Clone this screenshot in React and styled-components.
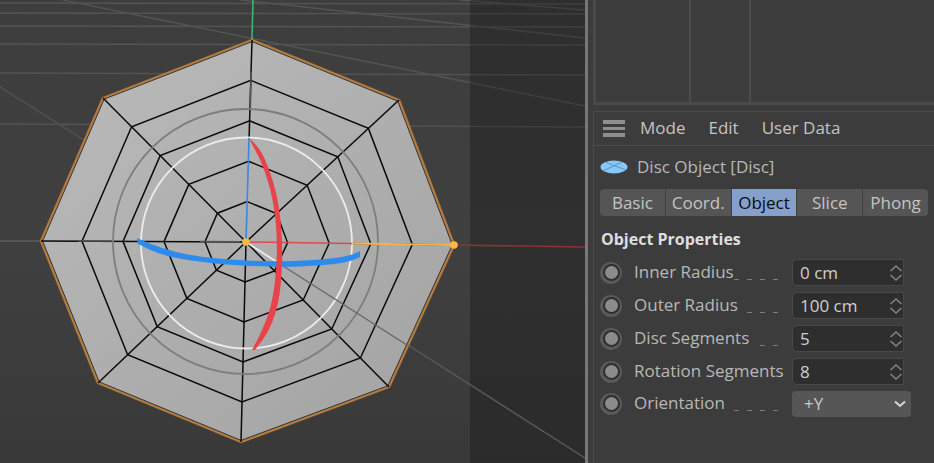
import React from "react";
import styled, { createGlobalStyle } from "styled-components";

const Global = createGlobalStyle`
  html, body { margin: 0; padding: 0; background: #3c3c3c; }
  #root { width: 934px; height: 463px; overflow: hidden; }
`;

const Page = styled.div`
  display: flex;
  width: 934px;
  height: 463px;
  overflow: hidden;
  background: #3c3c3c;
  font-family: "Open Sans", "Noto Sans", sans-serif;
  font-size: 17px;
  color: #bdbdbd;
`;
const ViewportSvg = styled.svg`
  display: block;
  flex: 0 0 585px;
  width: 585px;
  height: 463px;
`;
const Splitter = styled.div`
  flex: 0 0 3px;
  background: #777;
`;
const RightColumn = styled.div`
  flex: 1;
  display: flex;
  flex-direction: column;
  padding-left: 5px;
  min-width: 0;
`;
const TopPanel = styled.div`
  display: flex;
  height: 102px;
  flex: 0 0 auto;
  margin-bottom: 6px;
  border-left: 3px solid #4a4a4a;
  border-bottom: 3px solid #4a4a4a;
`;
const TopColumn = styled.div`
  width: ${(p) => p.$w}px;
  flex: 0 0 auto;
  border-right: 2px solid #4c4c4c;
  height: 100%;
`;
const AttrPanel = styled.div`
  flex: 1;
  border-left: 1px solid #4a4a4a;
  border-top: 1px solid #4a4a4a;
`;
const MenuBar = styled.div`
  display: flex;
  align-items: center;
  height: 33px;
  padding-left: 9px;
  border-bottom: 1px solid #4c4c4c;
`;
const Burger = styled.div`
  display: flex;
  flex-direction: column;
  gap: 3px;
  width: 22px;
  margin-right: 15px;
`;
const BurgerBar = styled.span`
  display: block;
  height: 3.5px;
  background: #8f8f8f;
`;
const MenuItem = styled.span`
  margin-right: ${(p) => p.$gap}px;
  margin-top: -2px;
  color: #c4c4c4;
  line-height: 20px;
`;
const ObjectHeader = styled.div`
  display: flex;
  align-items: center;
  gap: 9px;
  height: 26px;
  margin-top: 8px;
  padding-left: 6px;
`;
const Tabs = styled.div`
  display: flex;
  gap: 1px;
  margin: 9px 0 0 6px;
  width: 328px;
  height: 27px;
  border-radius: 4px;
  overflow: hidden;
  background: #404040;
`;
const Tab = styled.div`
  flex: 1;
  display: flex;
  align-items: center;
  justify-content: center;
  white-space: nowrap;
  background: ${(p) => (p.$active ? "#84a0cb" : "#555555")};
  color: ${(p) => (p.$active ? "#0c0c0c" : "#c4c4c4")};
`;
const SectionTitle = styled.div`
  margin: 12px 0 0 7px;
  height: 22px;
  line-height: 22px;
  font-weight: 700;
  font-size: 16px;
  color: #dedede;
`;
const Rows = styled.div`
  display: flex;
  flex-direction: column;
  margin-top: 6px;
`;
const Row = styled.div`
  display: flex;
  align-items: center;
  height: 33px;
  padding-left: 6px;
  &:last-child {
    height: 31px;
  }
`;
const Radio = styled.div`
  flex: 0 0 22px;
  width: 22px;
  height: 22px;
  border-radius: 50%;
  background: #5a5a5a;
  display: flex;
  align-items: center;
  justify-content: center;
  margin-right: 12px;
`;
const RadioDot = styled.div`
  width: 13px;
  height: 13px;
  border-radius: 50%;
  background: #8b8b8b;
  border: 2px solid #2e2e2e;
`;
const LabelCell = styled.div`
  flex: 0 0 158px;
  min-width: 0;
  display: flex;
  align-items: center;
`;
const Label = styled.span`
  flex: 0 0 auto;
  white-space: nowrap;
  color: #b8b8b8;
  position: relative;
  top: -1px;
`;
const Leader = styled.span`
  flex: 1;
  min-width: 0;
  display: flex;
  justify-content: flex-end;
  gap: 8px;
  padding: 13px 14px 0 0;
`;
const Dash = styled.i`
  display: block;
  width: 5px;
  height: 1px;
  background: #7c7c7c;
`;
const Field = styled.div`
  box-sizing: border-box;
  flex: 0 0 112px;
  height: 27px;
  display: flex;
  align-items: center;
  justify-content: space-between;
  padding: 0 0 0 7px;
  background: #2e2e2e;
  border: 1px solid #484848;
  border-radius: 5px 0 0 5px;
  color: #d0d0d0;
`;
const Select = styled.div`
  box-sizing: border-box;
  flex: 0 0 119px;
  height: 26px;
  display: flex;
  align-items: center;
  justify-content: space-between;
  padding: 0 5px 0 12px;
  background: #565656;
  border-radius: 4px;
  color: #c8c8c8;
`;

const C = [246, 242];
const V = [
  [252, 40], [399, 100], [454, 245], [389, 387],
  [241, 442], [98, 383], [41, 241], [103, 98],
];
const at = (p, t) => [C[0] + (p[0] - C[0]) * t, C[1] + (p[1] - C[1]) * t];
const ringPoints = (t) => V.map((p) => at(p, t).join(",")).join(" ");

const smooth = (pts) => {
  let d = `M${pts[0][0]} ${pts[0][1]}`;
  for (let i = 1; i < pts.length - 1; i++) {
    const mx = (pts[i][0] + pts[i + 1][0]) / 2;
    const my = (pts[i][1] + pts[i + 1][1]) / 2;
    d += ` Q${pts[i][0]} ${pts[i][1]} ${mx} ${my}`;
  }
  const last = pts[pts.length - 1];
  return `${d} L${last[0]} ${last[1]}`;
};
const crescent = (a, b) => `${smooth(a)} ${smooth(b).replace("M", "L")} Z`;

const RED_OUTER = [[249, 138], [258, 146], [267, 163], [278, 197], [283, 243], [280.5, 297], [270, 330], [255, 350]];
const RED_INNER = [[252, 350], [263, 330], [274, 297], [278, 243], [273, 197], [262, 163], [254, 148], [249, 138]];
const BLUE_TOP = [[137, 238], [163, 250], [213, 259], [280, 262], [330, 259], [352, 255], [360, 251]];
const BLUE_BOTTOM = [[360, 257], [352, 261], [330, 265], [280, 267.5], [213, 264], [163, 256], [138, 244]];

const GRID = [
  [0, 3, 585, 4], [0, 13, 585, 14], [0, 26, 585, 27], [0, 44, 585, 45],
  [0, 73, 585, 75], [0, 124, 585, 127], [63, 0, 585, 106], [0, 87, 84, 140],
  [240, 0, 585, 38], [460, 0, 585, 10],
];

function Viewport() {
  return (
    <ViewportSvg viewBox="0 0 585 463">
      <defs>
        <linearGradient id="bg" x1="0" y1="0" x2="0" y2="1">
          <stop offset="0" stopColor="#3d3d3d" />
          <stop offset="0.5" stopColor="#404040" />
          <stop offset="1" stopColor="#393939" />
        </linearGradient>
        <linearGradient id="disc" x1="0.1" y1="0.1" x2="0.8" y2="0.9">
          <stop offset="0" stopColor="#b8b8b8" />
          <stop offset="1" stopColor="#a6a6a6" />
        </linearGradient>
      </defs>
      <rect width="585" height="463" fill="url(#bg)" />
      {GRID.map((g, i) => (
        <line key={i} x1={g[0]} y1={g[1]} x2={g[2]} y2={g[3]} stroke="#545454" strokeWidth="1.4" />
      ))}
      <line x1="0" y1="241" x2="41" y2="241" stroke="#5c5c5c" strokeWidth="1.4" />
      <rect x="470" y="0" width="115" height="463" fill="#000" fillOpacity="0.24" />
      <line x1="454" y1="245" x2="585" y2="247" stroke="#8a3434" strokeWidth="1.6" />
      <line x1="252" y1="40" x2="253" y2="0" stroke="#3fb56f" strokeWidth="1.6" />
      <line x1="400" y1="340" x2="585" y2="458" stroke="#5a5a5a" strokeWidth="1.4" />

      <polygon points={ringPoints(1)} fill="url(#disc)" stroke="#b57a3c" strokeWidth="2.4" strokeLinejoin="round" />
      <polygon points={ringPoints(0.992)} fill="none" stroke="#222" strokeWidth="0.9" />
      {[0.8, 0.6, 0.4, 0.2].map((t) => (
        <polygon key={t} points={ringPoints(t)} fill="none" stroke="#0a0a0a" strokeWidth="1.5" />
      ))}
      {V.map((p, i) => {
        const s = i === 0 || i === 2 ? at(p, 0.51) : C;
        return <line key={i} x1={s[0]} y1={s[1]} x2={p[0]} y2={p[1]} stroke="#0a0a0a" strokeWidth="1.5" />;
      })}
      <line x1="251" y1="72" x2="250.4" y2="108" stroke="#555" strokeWidth="1.5" />
      <line x1="78" y1="241" x2="112" y2="241" stroke="#555" strokeWidth="1.5" />
      <line x1="200" y1="241.5" x2="240" y2="241.8" stroke="#555" strokeWidth="1.5" />
      <circle cx="245.5" cy="241.5" r="132.5" fill="none" stroke="#7d7d7d" strokeWidth="1.8" />
      <circle cx="246.5" cy="243" r="105.5" fill="none" stroke="#ececec" strokeWidth="1.8" />

      <line x1="246" y1="242" x2="249" y2="138" stroke="#3b86e0" strokeWidth="1.6" />
      <line x1="246" y1="242" x2="352" y2="243.5" stroke="#e04a4a" strokeWidth="1.5" />
      <line x1="352" y1="243.5" x2="454" y2="245" stroke="#f7b548" strokeWidth="1.8" />
      <line x1="280" y1="264" x2="410" y2="347" stroke="#666" strokeWidth="1.4" />
      <line x1="246" y1="242" x2="280" y2="264" stroke="#f0f0f0" strokeWidth="1.6" />

      <path d={crescent(BLUE_TOP, BLUE_BOTTOM)} fill="#2e8bee" />
      <path d={crescent(RED_OUTER, RED_INNER)} fill="#e8434a" />

      <circle cx="246" cy="242" r="3.8" fill="#fbb93f" />
      <circle cx="454" cy="245" r="3.8" fill="#fbb93f" />
    </ViewportSvg>
  );
}

function DiscIcon() {
  return (
    <svg width="28" height="14" viewBox="0 0 28 14" style={{ flex: "0 0 auto" }}>
      <ellipse cx="14" cy="7" rx="13.5" ry="6.5" fill="#86c8fb" />
      <path d="M3 11 L22 2 M6 2.5 L26 10" stroke="#5a8bb5" strokeWidth="0.9" fill="none" />
    </svg>
  );
}

function Spinner() {
  return (
    <svg width="14" height="18" viewBox="0 0 14 18" fill="none" stroke="#858585" strokeWidth="1.5">
      <path d="M1.5 7 L7 2 L12.5 7" />
      <path d="M1.5 11 L7 16 L12.5 11" />
    </svg>
  );
}

function Chevron() {
  return (
    <svg width="12" height="8" viewBox="0 0 12 8" fill="none" stroke="#d8d8d8" strokeWidth="2">
      <path d="M1 1.5 L6 6 L11 1.5" />
    </svg>
  );
}

const ROWS = [
  { label: "Inner Radius", dashes: 4, value: "0 cm" },
  { label: "Outer Radius", dashes: 3, value: "100 cm" },
  { label: "Disc Segments", dashes: 2, value: "5" },
  { label: "Rotation Segments", dashes: 0, value: "8" },
  { label: "Orientation", dashes: 4, select: "+Y" },
];

export default function App() {
  return (
    <Page>
      <Global />
      <Viewport />
      <Splitter />
      <RightColumn>
        <TopPanel>
          <TopColumn $w={93} />
          <TopColumn $w={58} />
        </TopPanel>
        <AttrPanel>
          <MenuBar>
            <Burger>
              <BurgerBar />
              <BurgerBar />
              <BurgerBar />
            </Burger>
            <MenuItem $gap={23}>Mode</MenuItem>
            <MenuItem $gap={23}>Edit</MenuItem>
            <MenuItem $gap={0}>User Data</MenuItem>
          </MenuBar>
          <ObjectHeader>
            <DiscIcon />
            <Label>Disc Object [Disc]</Label>
          </ObjectHeader>
          <Tabs>
            <Tab>Basic</Tab>
            <Tab>Coord.</Tab>
            <Tab $active>Object</Tab>
            <Tab>Slice</Tab>
            <Tab>Phong</Tab>
          </Tabs>
          <SectionTitle>Object Properties</SectionTitle>
          <Rows>
            {ROWS.map((r) => (
              <Row key={r.label}>
                <Radio>
                  <RadioDot />
                </Radio>
                <LabelCell>
                  <Label>{r.label}</Label>
                  <Leader>
                    {Array.from({ length: r.dashes }).map((_, i) => (
                      <Dash key={i} />
                    ))}
                  </Leader>
                </LabelCell>
                {r.select ? (
                  <Select>
                    {r.select}
                    <Chevron />
                  </Select>
                ) : (
                  <Field>
                    {r.value}
                    <Spinner />
                  </Field>
                )}
              </Row>
            ))}
          </Rows>
        </AttrPanel>
      </RightColumn>
    </Page>
  );
}
